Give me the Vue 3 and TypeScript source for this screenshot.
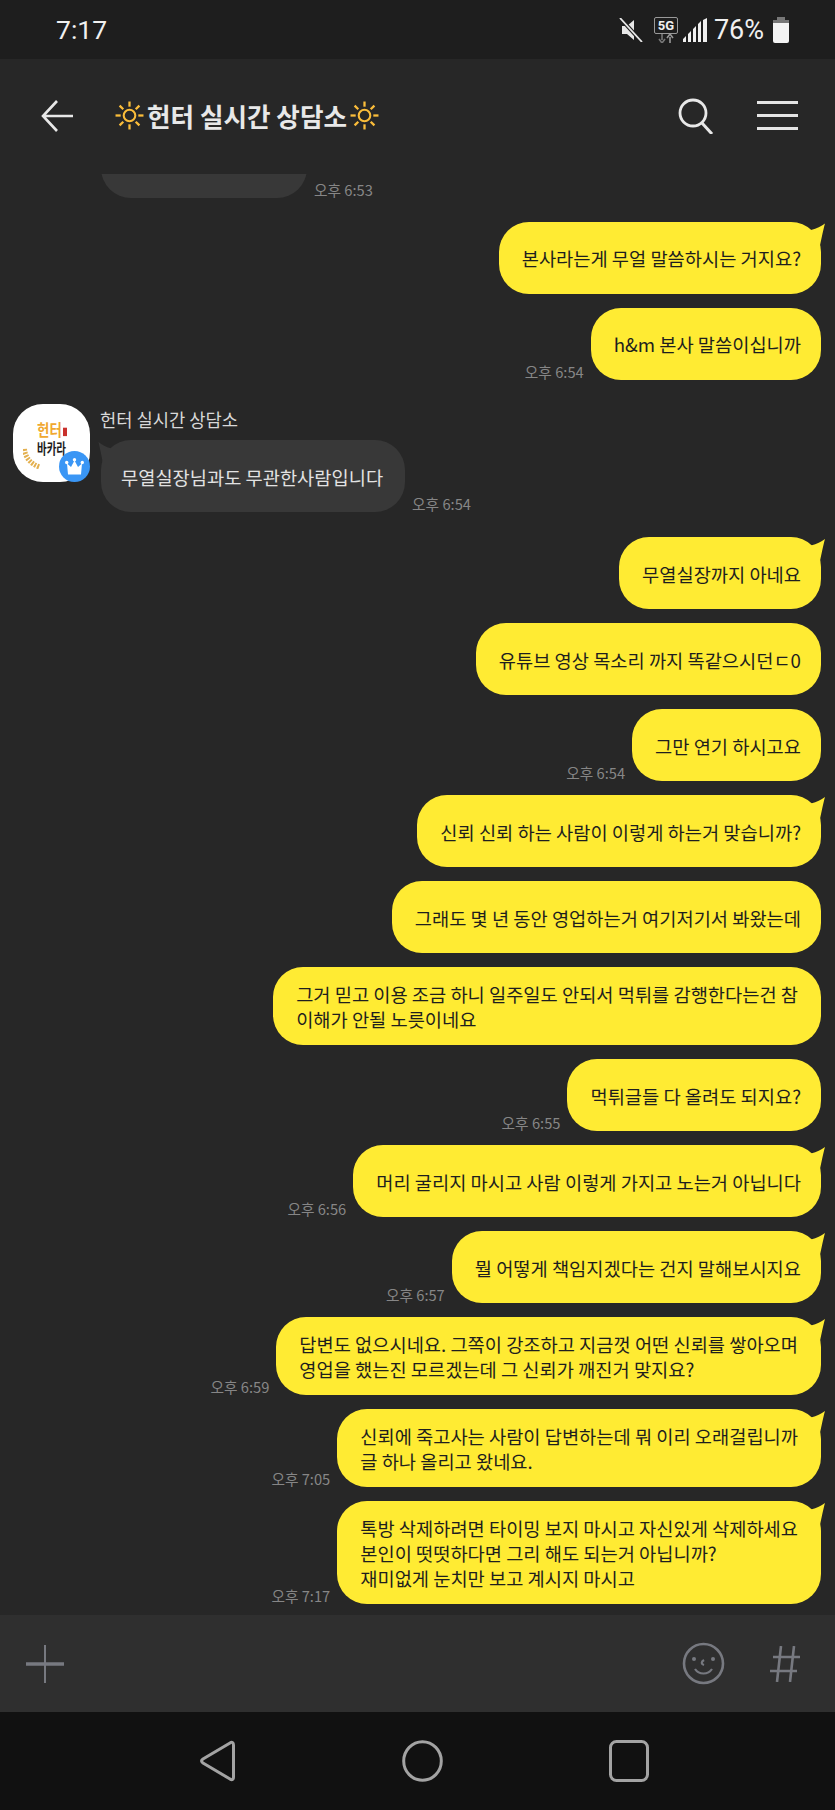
<script setup lang="ts">
interface Message {
  text: string
  time?: string
  tail?: boolean
}

const messages: Message[] = [
  { text: '본사라는게 무얼 말씀하시는 거지요?', tail: true },
  { text: 'h&m 본사 말씀이십니까', time: '오후 6:54' },
]

const laterMessages: Message[] = [
  { text: '무열실장까지 아네요', tail: true },
  { text: '유튜브 영상 목소리 까지 똑같으시던ㄷ0' },
  { text: '그만 연기 하시고요', time: '오후 6:54' },
  { text: '신뢰 신뢰 하는 사람이 이렇게 하는거 맞습니까?', tail: true },
  { text: '그래도 몇 년 동안 영업하는거 여기저기서 봐왔는데' },
  { text: '그거 믿고 이용 조금 하니 일주일도 안되서 먹튀를 감행한다는건 참\n이해가 안될 노릇이네요' },
  { text: '먹튀글들 다 올려도 되지요?', time: '오후 6:55' },
  { text: '머리 굴리지 마시고 사람 이렇게 가지고 노는거 아닙니다', time: '오후 6:56', tail: true },
  { text: '뭘 어떻게 책임지겠다는 건지 말해보시지요', time: '오후 6:57', tail: true },
  { text: '답변도 없으시네요. 그쪽이 강조하고 지금껏 어떤 신뢰를 쌓아오며\n영업을 했는진 모르겠는데 그 신뢰가 깨진거 맞지요?', time: '오후 6:59', tail: true },
  { text: '신뢰에 죽고사는 사람이 답변하는데 뭐 이리 오래걸립니까\n글 하나 올리고 왔네요.', time: '오후 7:05', tail: true },
  { text: '톡방 삭제하려면 타이밍 보지 마시고 자신있게 삭제하세요\n본인이 떳떳하다면 그리 해도 되는거 아닙니까?\n재미없게 눈치만 보고 계시지 마시고', time: '오후 7:17', tail: true },
]

const rays = [0, 45, 90, 135, 180, 225, 270, 315]
</script>

<template>
  <div class="phone">
    <div class="status">
      <span class="clock">7:17</span>
      <div class="status-icons">
        <svg width="24" height="24" viewBox="0 0 24 24" class="mute">
          <path d="M3 8h5l7-6v20l-7-6H3z" fill="#e8e8e8" />
          <path d="M1 0l22 24" stroke="#1e1e1e" stroke-width="4" />
          <path d="M1 0l22 24" stroke="#e8e8e8" stroke-width="1.8" />
        </svg>
        <div class="fiveg">
          <span class="fiveg-box">5G</span>
          <svg width="22" height="9" viewBox="0 0 22 9">
            <path d="M7 0v6M4 5l3 4 3-4" stroke="#777" stroke-width="1.6" fill="none" />
            <path d="M15 9V3M12 4l3-4 3 4" stroke="#999" stroke-width="1.6" fill="none" />
          </svg>
        </div>
        <svg width="25" height="24" viewBox="0 0 25 24" class="signal">
          <path d="M0 24v-3l3-3v6zM5 24v-8l3-3v11zM10 24V11l3-3v16zM15 24V6l3-3v21zM20 24V2l4-2v24z" fill="#f0f0f0" />
        </svg>
        <span class="battery-text">76%</span>
        <div class="battery"><span class="battery-cap"></span><span class="battery-top"></span><span class="battery-body"></span></div>
      </div>
    </div>

    <header class="header">
      <svg width="32" height="32" viewBox="0 0 32 32" class="back">
        <path d="M16 1L2 16l14 15M2 16h30" fill="none" stroke="#e8e8e8" stroke-width="2.6" />
      </svg>
      <div class="title">
        <svg width="29" height="29" viewBox="0 0 28 28">
          <circle cx="14" cy="14" r="5.6" fill="none" stroke="#fbbd3a" stroke-width="2" />
          <path v-for="r in rays" :key="r" d="M14 0.500v5" stroke="#fbbd3a" stroke-width="2.2" :transform="`rotate(${r} 14 14)`" />
        </svg>
        <span>헌터 실시간 상담소</span>
        <svg width="29" height="29" viewBox="0 0 28 28">
          <circle cx="14" cy="14" r="5.6" fill="none" stroke="#fbbd3a" stroke-width="2" />
          <path v-for="r in rays" :key="r" d="M14 0.500v5" stroke="#fbbd3a" stroke-width="2.2" :transform="`rotate(${r} 14 14)`" />
        </svg>
      </div>
      <svg width="36" height="36" viewBox="0 0 36 36" class="search">
        <circle cx="15" cy="15" r="13" fill="none" stroke="#e8e8e8" stroke-width="2.8" />
        <path d="M24 25l10 11" stroke="#e8e8e8" stroke-width="3" />
      </svg>
      <div class="menu"><span></span><span></span><span></span></div>
    </header>

    <main class="chat">
      <div class="row in-clip">
        <div class="bubble incoming old"></div>
        <span class="time">오후 6:53</span>
      </div>

      <div v-for="(m, i) in messages" :key="i" class="row sent">
        <span v-if="m.time" class="time">{{ m.time }}</span>
        <div class="bubble outgoing" :class="{ tail: m.tail }">{{ m.text }}</div>
      </div>

      <div class="incoming-group">
        <div class="avatar">
          <div class="logo">
            <span class="logo-top">헌터<i></i></span>
            <span class="logo-bottom">바카라</span>
            <svg width="18" height="21" viewBox="0 0 18 21" class="wheat">
              <path d="M1.500 1c.5 8 6 15 15 18" fill="none" stroke="#e3b04f" stroke-width="5" stroke-dasharray="2 1.200" />
            </svg>
          </div>
          <span class="badge">
            <svg width="19" height="17" viewBox="0 0 19 17">
              <path d="M2 5.500l4 3.500 3.500-6.500L13 9l4-3.500L16 16.500H3z" fill="#fff" />
              <circle cx="1.700" cy="4.500" r="1.700" fill="#fff" />
              <circle cx="9.500" cy="1.700" r="1.700" fill="#fff" />
              <circle cx="17.300" cy="4.500" r="1.700" fill="#fff" />
            </svg>
          </span>
        </div>
        <div class="incoming-body">
          <div class="name">헌터 실시간 상담소</div>
          <div class="row">
            <div class="bubble incoming tail">무열실장님과도 무관한사람입니다</div>
            <span class="time">오후 6:54</span>
          </div>
        </div>
      </div>

      <div v-for="(m, i) in laterMessages" :key="i" class="row sent">
        <span v-if="m.time" class="time">{{ m.time }}</span>
        <div class="bubble outgoing" :class="{ tail: m.tail, multi: m.text.includes('\n') }">{{ m.text }}</div>
      </div>
    </main>

    <div class="inputbar">
      <svg width="38" height="38" viewBox="0 0 38 38">
        <path d="M19 0v38" stroke="#777980" stroke-width="2" />
        <path d="M0 19h38" stroke="#777980" stroke-width="3.4" />
      </svg>
      <div class="input-right">
        <svg width="43" height="43" viewBox="0 0 43 43">
          <circle cx="21.500" cy="21.500" r="19.500" fill="none" stroke="#777980" stroke-width="2.600" />
          <circle cx="12" cy="17" r="2" fill="#777980" />
          <circle cx="31" cy="17" r="2" fill="#777980" />
          <path d="M22 18c-3 2-3 4 0 5M13 27c4 6 13 6 17 0" fill="none" stroke="#777980" stroke-width="2.200" />
        </svg>
        <svg width="30" height="36" viewBox="0 0 30 36">
          <path d="M11 0L7 36M24 0l-4 36M3 11h27M0 25h27" stroke="#777980" stroke-width="2.600" fill="none" />
        </svg>
      </div>
    </div>

    <nav class="navbar">
      <svg width="36" height="42" viewBox="0 0 36 42">
        <path d="M30 3c2-1.500 3.500-.5 3.500 2v32c0 2.500-1.500 3.500-3.500 2L3 23c-2-1.500-2-2.500 0-4z" fill="none" stroke="#a3a3a3" stroke-width="3" />
      </svg>
      <svg width="41" height="42" viewBox="0 0 41 42">
        <ellipse cx="20.500" cy="21" rx="18.800" ry="19.300" fill="none" stroke="#a3a3a3" stroke-width="3" />
      </svg>
      <svg width="40" height="42" viewBox="0 0 40 42">
        <rect x="1.500" y="1.500" width="37" height="39" rx="6" fill="none" stroke="#a3a3a3" stroke-width="3" />
      </svg>
    </nav>
  </div>
</template>

<style scoped>
.phone {
  width: 835px;
  height: 1810px;
  display: flex;
  flex-direction: column;
  overflow: hidden;
  background: #272727;
  font-family: "Noto Sans CJK KR", "Noto Sans", sans-serif;
}

.status {
  height: 59px;
  flex: none;
  display: flex;
  align-items: center;
  justify-content: space-between;
  padding: 0 46px 0 56px;
  background: #1e1e1e;
  color: #f0f0f0;
}

.clock {
  font-family: Roboto, sans-serif;
  font-size: 26.500px;
}

.status-icons {
  display: flex;
  align-items: center;
}

.mute {
  margin-right: 11px;
}

.fiveg {
  display: flex;
  flex-direction: column;
  align-items: center;
  width: 24px;
  margin-right: 5px;
}

.fiveg-box {
  width: 24px;
  height: 17px;
  box-sizing: border-box;
  border: 1px solid #999;
  border-radius: 2px;
  font-family: Roboto, sans-serif;
  font-size: 13px;
  font-weight: 700;
  line-height: 15px;
  text-align: center;
}

.battery-text {
  font-family: Roboto, sans-serif;
  font-size: 27px;
  margin: 0 9px 0 6px;
}

.battery {
  width: 16px;
  height: 26px;
  display: flex;
  flex-direction: column;
  align-items: center;
}

.battery-cap {
  width: 8px;
  height: 3px;
  background: #777;
}

.battery-top {
  width: 16px;
  height: 3px;
  background: #777;
}

.battery-body {
  width: 16px;
  flex: 1;
  background: #f4f4f4;
  border-radius: 0 0 2px 2px;
}

.header {
  height: 113px;
  flex: none;
  display: flex;
  align-items: center;
  padding: 0 37px 2px 41px;
}

.title {
  display: flex;
  align-items: center;
  gap: 3px;
  margin-left: 42px;
  flex: 1;
  color: #e8e8e8;
  font-size: 25.600px;
  font-weight: 700;
}

.search {
  margin-right: 43px;
}

.menu {
  width: 41px;
  display: flex;
  flex-direction: column;
  gap: 10px;
}

.menu span {
  height: 3px;
  background: #e4e4e4;
}

.chat {
  flex: 1;
  min-height: 0;
  display: flex;
  flex-direction: column;
  justify-content: flex-end;
  gap: 14px;
  padding-bottom: 11px;
  overflow: hidden;
}

.row {
  display: flex;
  align-items: flex-end;
  gap: 7px;
  flex: none;
}

.in-clip {
  padding-left: 101px;
  margin-bottom: 10px;
}

.sent {
  justify-content: flex-end;
  padding-right: 14px;
}

.time {
  color: #868686;
  font-size: 14.700px;
  line-height: 16px;
  white-space: nowrap;
}

.bubble {
  position: relative;
  box-sizing: border-box;
  min-height: 72px;
  display: flex;
  align-items: center;
  padding: 14px 20px 14px 23px;
  border-radius: 30px;
  font-size: 18.700px;
  line-height: 25px;
  white-space: pre-line;
}

.bubble.multi {
  padding-right: 23px;
}

.outgoing {
  background: #ffeb33;
  color: #1e1e1e;
}

.outgoing.tail::after {
  content: "";
  position: absolute;
  top: 0;
  right: -4px;
  width: 20px;
  height: 24px;
  background: #ffeb33;
  clip-path: path("M20 2C16 5 12 7 6 8.500L6 24L15 24C17 15 18 9 20 2Z");
}

.incoming {
  background: #383838;
  color: #e2e2e2;
  padding: 14px 22px 14px 20px;
}

.incoming.tail::after {
  content: "";
  position: absolute;
  top: 0;
  left: -3px;
  width: 16px;
  height: 24px;
  background: #383838;
  clip-path: path("M0.500 2C4 5 8 7 13 8.500L13 24L5 24C3.500 15 2 9 0.500 2Z");
}

.old {
  width: 206px;
}

.incoming-group {
  display: flex;
  flex: none;
  gap: 10px;
  padding-left: 13px;
  margin: 10px 0 11px;
}

.avatar {
  position: relative;
  width: 77px;
  height: 78px;
  flex: none;
  background: #fff;
  border-radius: 30px;
}

.logo {
  display: flex;
  flex-direction: column;
  align-items: flex-start;
  padding: 17px 0 0 24px;
  font-weight: 700;
}

.logo-top {
  display: flex;
  align-items: flex-end;
  height: 17px;
  color: #f0a830;
  font-size: 13.500px;
  line-height: 17px;
  transform: scaleY(1.200);
}

.logo-top i {
  display: block;
  width: 4px;
  height: 7px;
  margin: 0 0 3px 1px;
  background: #c9302c;
}

.logo-bottom {
  height: 15px;
  margin-top: 2px;
  color: #1c1c1c;
  font-size: 10.500px;
  line-height: 15px;
  transform: scaleY(1.400);
}

.wheat {
  position: absolute;
  left: 10px;
  top: 44px;
}

.badge {
  position: absolute;
  left: 46px;
  top: 47px;
  width: 31px;
  height: 31px;
  border-radius: 50%;
  background: #3a96f5;
  display: flex;
  align-items: center;
  justify-content: center;
}

.incoming-body {
  display: flex;
  flex-direction: column;
  margin-left: 1px;
}

.name {
  height: 33.500px;
  color: #d8d8d8;
  font-size: 17.700px;
  line-height: 24px;
  margin-top: 3px;
  margin-left: -1px;
}

.inputbar {
  height: 97px;
  flex: none;
  display: flex;
  align-items: center;
  justify-content: space-between;
  padding: 0 35px 0 26px;
  background: #2f2f2f;
}

.input-right {
  display: flex;
  align-items: center;
  gap: 45px;
}

.navbar {
  height: 98px;
  flex: none;
  display: flex;
  align-items: center;
  justify-content: center;
  gap: 166px;
  padding-left: 13px;
  background: #111;
}
</style>
